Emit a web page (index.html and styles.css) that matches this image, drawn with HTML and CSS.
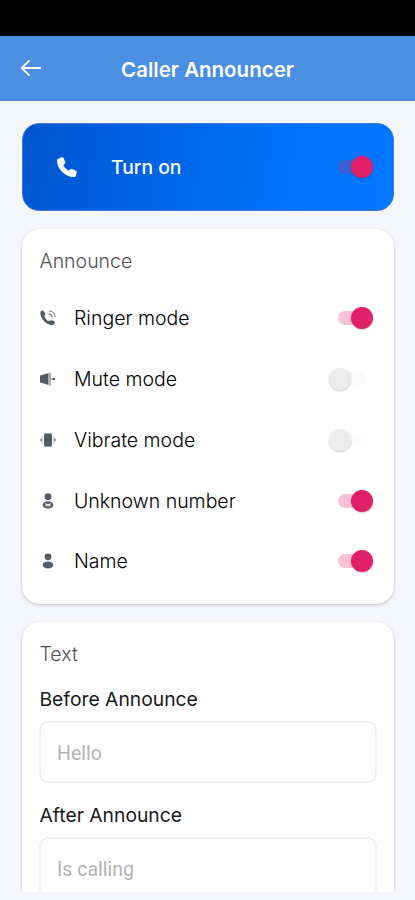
FILE: index.html
```html
<!DOCTYPE html>
<html lang="en">
<head>
<meta charset="utf-8">
<title>Caller Announcer</title>
<link rel="stylesheet" href="styles.css">
</head>
<body>
<div class="status-bar"></div>
<header class="app-bar">
  <svg class="back" viewBox="0 0 22 18"><path d="M20.2 9H1.8M9 1.8L1.8 9L9 16.2"/></svg>
  <h1 class="title"><span>Caller Announcer</span></h1>
</header>
<main class="content">
  <section class="hero">
    <svg class="hero-icon" viewBox="0 0 20 20"><path d="M.8 2 4.400.3Q6 0 6.600 1L8.200 5Q8.400 6.200 7.500 7L6.300 8.200Q8 11.800 11.800 13.700L13 12.500Q13.800 11.600 15 12L19 13.800Q20 14.400 19.700 15.600L18.800 18.900Q18.500 19.900 17.300 20C8 20 0 12 0 3.400Q0 2.500.8 2Z"/></svg>
    <span class="hero-label"><span>Turn on</span></span>
    <span class="switch on"></span>
  </section>
  <section class="card modes">
    <h2 class="heading"><span>Announce</span></h2>
    <div class="row">
      <svg class="icon" viewBox="0 0 16 16"><path d="M.5 1.500 3.200.3 5.500 4 4.300 6Q5.500 9 7.800 11L10.500 10.400Q13 10 15 12L14 14.500Q12 15.800 8.500 14.300C3.500 12 -.5 6 .5 1.500Z"/><path class="wave" d="M9 1C12.500 1 15 3.500 15 7M8.500 4C10.500 4 12 5.500 12 7.500"/></svg>
      <span class="label">Ringer mode</span><span class="switch on"></span>
    </div>
    <div class="row">
      <svg class="icon" viewBox="0 0 16 16"><path d="M0 4.500 2.500 4V12L0 11.500ZM2 4 8.500 2V14L2 12Z"/><path class="wave" d="M10 1.500V14.500M11 8H13"/><circle cx="14" cy="8" r="1.300"/></svg>
      <span class="label">Mute mode</span><span class="switch"></span>
    </div>
    <div class="row">
      <svg class="icon" viewBox="0 0 16 16"><path d="M5 1.500H11Q12 1.500 12 2.500V13.500Q12 14.500 11 14.500H5Q4 14.500 4 13.500V2.500Q4 1.500 5 1.500Z"/><path class="wave pale" d="M2.500 4V12M13.500 4V12"/><path d="M-.5 8 1.800 6V10ZM16.500 8 14.200 6V10Z" opacity=".65"/></svg>
      <span class="label">Vibrate mode</span><span class="switch"></span>
    </div>
    <div class="row">
      <svg class="icon" viewBox="0 0 16 16"><circle cx="8" cy="3.700" r="3.400"/><ellipse cx="8" cy="12" rx="5.300" ry="3.700"/><path class="cut" d="M5.500 10 8 11.300 10.500 10V13.300H5.500Z"/></svg>
      <span class="label">Unknown number</span><span class="switch on"></span>
    </div>
    <div class="row">
      <svg class="icon" viewBox="0 0 16 16"><circle cx="8" cy="3.800" r="3.400"/><ellipse cx="8" cy="12" rx="5.300" ry="3.400"/></svg>
      <span class="label">Name</span><span class="switch on"></span>
    </div>
  </section>
  <section class="card text-card">
    <h2 class="heading"><span>Text</span></h2>
    <div class="field-label"><span>Before Announce</span></div>
    <div class="field"><span>Hello</span></div>
    <div class="field-label"><span>After Announce</span></div>
    <div class="field"><span>Is calling</span></div>
  </section>
</main>
</body>
</html>
```
FILE: styles.css
```css
* { box-sizing: border-box; }
body {
  margin: 0;
  height: 900px;
  overflow: hidden;
  display: flex;
  flex-direction: column;
  background: #f4f6fb;
  font-family: Inter, "Liberation Sans", sans-serif;
  color: #17181a;
}
h1, h2 { margin: 0; }
.status-bar { height: 36px; flex: none; background: #000; }
.app-bar {
  height: 64.500px;
  flex: none;
  display: grid;
  grid-template-columns: 42px 1fr 42px;
  align-items: center;
  background: #4a8fe2;
  border-bottom: 1px solid #4382d2;
}
.back { width: 22px; height: 18px; margin-left: 20px; fill: none; stroke: #fff; stroke-width: 1.900; stroke-linecap: round; stroke-linejoin: round; }
.title { font-size: 20.500px; line-height: 28px; font-weight: 600; color: #fff; text-align: center; padding-top: 4px; }
.content {
  height: 791.500px;
  flex: none;
  overflow: hidden;
  padding: 22.500px 21.500px 0 22px;
}
.hero {
  height: 88px;
  display: flex;
  align-items: center;
  padding: 0 20px 0 33.500px;
  border-radius: 17px;
  border: 1px solid #3c7ddd;
  background: linear-gradient(100deg, #0055d0 0%, #0073fa 72%, #0078ff 100%);
}
.hero-icon { width: 20px; height: 20px; fill: #fff; }
.hero-label { flex: 1; padding-left: 34.500px; font-size: 19.300px; font-weight: 500; color: #fff; }
.card {
  margin-top: 18px;
  padding: 0 17.500px;
  background: #fff;
  border-radius: 18px;
  box-shadow: 0 1px 3px rgba(40, 45, 55, .28);
}
.modes { height: 374.500px; }
.heading { height: 58.800px; padding-top: 18px; font-size: 19.500px; line-height: 28px; font-weight: 300; color: #4f5054; }
.row { height: 60.800px; display: flex; align-items: center; padding-right: 3px; }
.icon { width: 16px; height: 16px; overflow: visible; fill: #535b68; }
.wave { fill: none; stroke: #656c77; stroke-width: 1.100; }
.pale { stroke: #c2c9d0; }
.cut { fill: #e2e6ea; }
.label { flex: 1; margin-left: 18.500px; font-size: 19.500px; line-height: 28px; font-weight: 300; color: #000; }
.switch {
  position: relative;
  width: 44px;
  height: 24px;
  flex: none;
}
.switch::before {
  content: "";
  position: absolute;
  left: 9px;
  top: 5px;
  width: 28px;
  height: 14px;
  border-radius: 7px;
  background: #fbfbfb;
}
.switch::after {
  content: "";
  position: absolute;
  left: 0;
  top: 1px;
  width: 22px;
  height: 22px;
  border-radius: 50%;
  background: #ececec;
  box-shadow: 0 1px 2px rgba(0, 0, 0, .2);
}
.switch.on::before { background: rgba(225, 30, 104, .27); }
.switch.on::after { left: 22px; background: #e21f69; }
.text-card { height: 330px; }
.text-card .heading { height: 62.500px; }
.field-label { height: 37px; font-size: 19.300px; line-height: 30px; }
.field {
  height: 62px;
  margin: 0 -.500px 17px;
  padding: 0 16px;
  border: 2px solid #efefef;
  border-radius: 9px;
  font-family: Roboto, "Liberation Sans", sans-serif;
  font-size: 19.500px;
  line-height: 61px;
  color: #b2b3b5;
}
```
